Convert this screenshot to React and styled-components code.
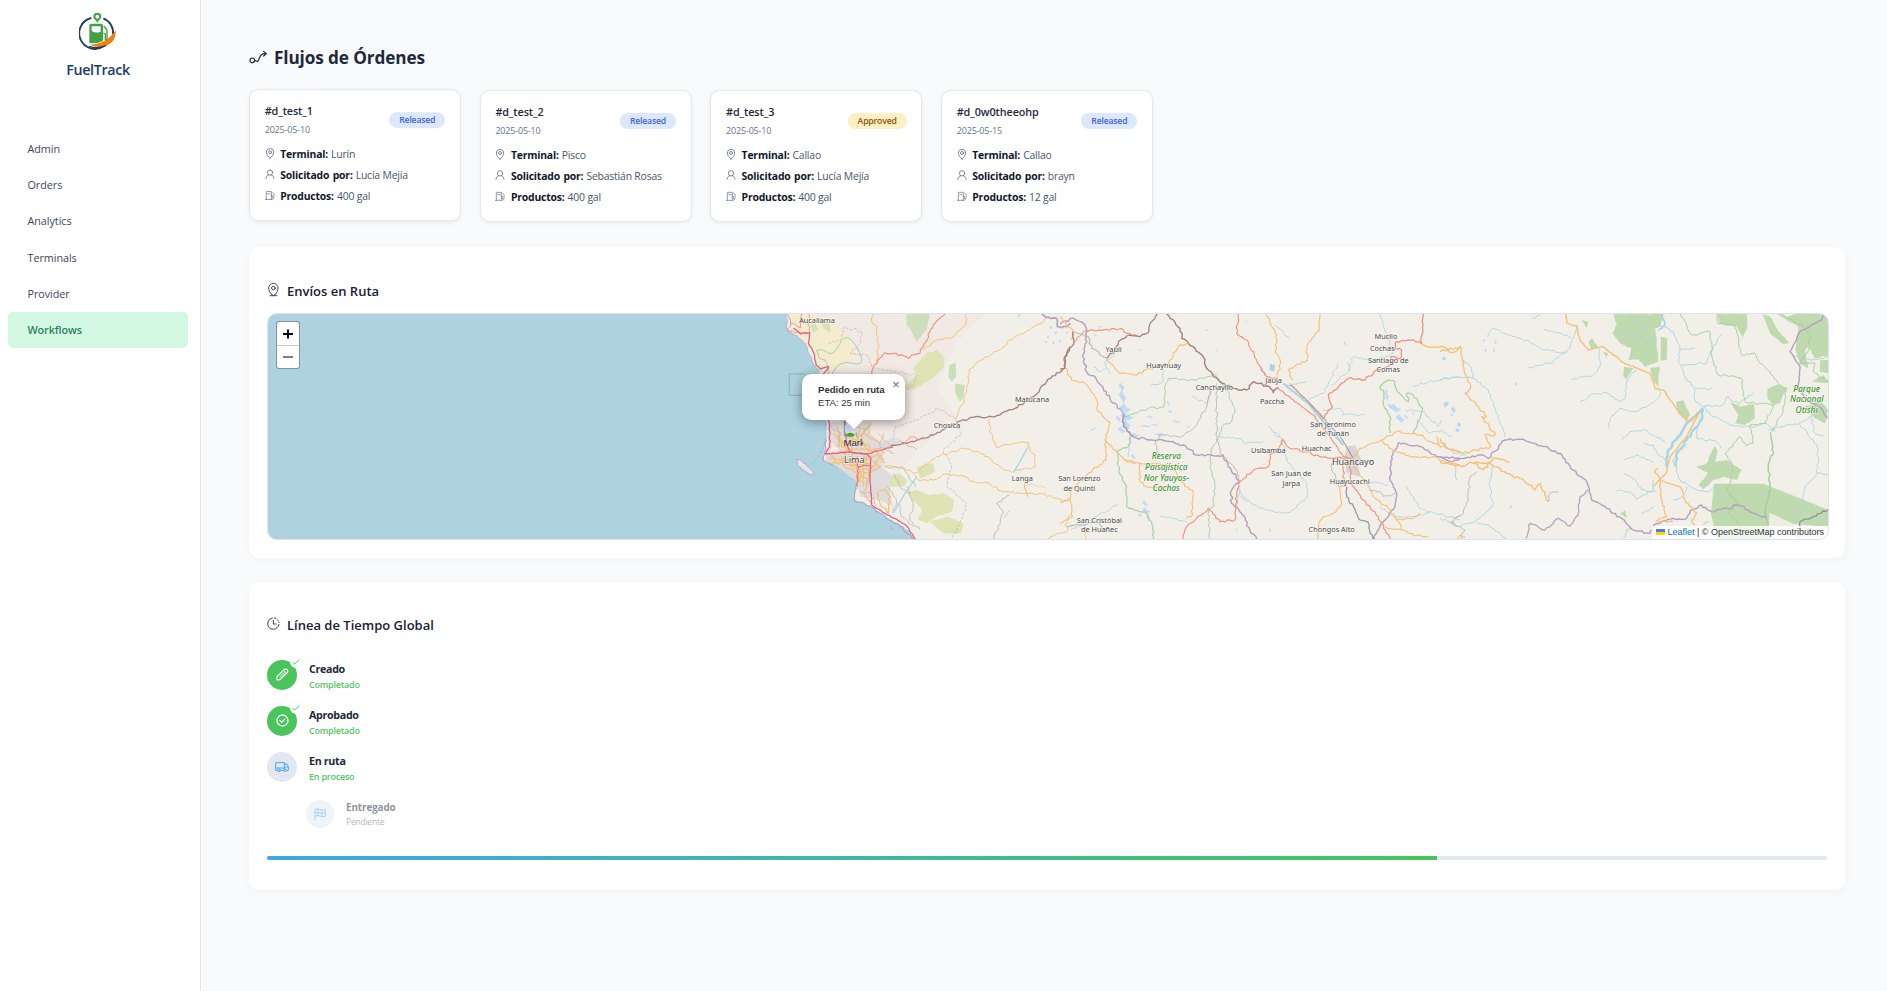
import React from 'react';
import styled, { createGlobalStyle } from 'styled-components';

const Global = createGlobalStyle`
  *, *::before, *::after { box-sizing: border-box; }
  body {
    margin: 0;
    background: #f8fafc;
    color: #0f172a;
    font-family: "Open Sans", "Noto Sans", sans-serif;
    overflow: hidden;
  }
  h1, h2, p { margin: 0; }
`;

/* ---------- layout ---------- */

const Shell = styled.div`
  display: flex;
  height: 991px;
`;

const Sidebar = styled.aside`
  flex: 0 0 201px;
  background: #fff;
  border-right: 1px solid #e2e5ea;
`;

const Brand = styled.div`
  display: flex;
  flex-direction: column;
  align-items: center;
  padding: 12px 4px 0 0;
  height: 131px;
`;

const BrandName = styled.div`
  margin-top: 10px;
  font-size: 14.3px;
  line-height: 20px;
  font-weight: 600;
  letter-spacing: -0.35px;
  color: #1a3b66;
`;

const Nav = styled.nav`
  display: flex;
  flex-direction: column;
  padding: 0 12px 0 8px;
`;

const NavItem = styled.a`
  height: 36.2px;
  line-height: 36px;
  padding-left: 19.5px;
  border-radius: 5px;
  font-size: 10.8px;
  letter-spacing: ${(p) => (p.$active ? '-0.1px' : '-0.05px')};
  font-weight: ${(p) => (p.$active ? 600 : 400)};
  color: ${(p) => (p.$active ? '#2b8060' : '#3d4656')};
  background: ${(p) => (p.$active ? '#d3f9e2' : 'transparent')};
`;

const Main = styled.main`
  flex: 1;
  min-width: 0;
  padding: 43px 42px 0 48px;
`;

const PageTitle = styled.h1`
  display: flex;
  align-items: center;
  gap: 6px;
  height: 28px;
  font-size: 17.2px;
  font-weight: 700;
  letter-spacing: -0.12px;
  color: #1e293b;
`;

const CardGrid = styled.div`
  display: grid;
  grid-template-columns: repeat(4, 212px);
  gap: 18.7px;
  margin-top: 19.3px;
`;

const Card = styled.article`
  height: 132px;
  padding: 12.8px 14.7px;
  background: #fff;
  border: 1px solid #e2e8f0;
  border-radius: 9.6px;
  box-shadow: 0 1px 4px rgba(15, 23, 42, 0.06);
  transform: ${(p) => (p.$raised ? 'translateY(-0.8px)' : 'none')};
`;

const CardHead = styled.header`
  display: flex;
  align-items: center;
  justify-content: space-between;
  height: 34px;
  margin-bottom: 6px;
`;

const OrderId = styled.div`
  font-size: 10.8px;
  line-height: 16px;
  font-weight: 600;
  letter-spacing: -0.1px;
  color: #1e293b;
`;

const OrderDate = styled.div`
  margin-top: 4px;
  font-size: 9px;
  line-height: 14px;
  letter-spacing: -0.18px;
  color: #64748b;
`;

const badgeTones = {
  Released: { bg: '#dbe8fe', fg: '#4763de' },
  Approved: { bg: '#fef0c3', fg: '#93500f' },
};

const Badge = styled.span`
  height: 16px;
  line-height: 16px;
  padding: 0 10px;
  border-radius: 8px;
  font-size: 8.7px;
  font-weight: 600;
  letter-spacing: -0.2px;
  background: ${(p) => badgeTones[p.$tone].bg};
  color: ${(p) => badgeTones[p.$tone].fg};
`;

const Row = styled.div`
  display: flex;
  align-items: center;
  height: 21px;
  font-size: 10.4px;
  color: #475569;
  white-space: nowrap;

  svg { margin: -2px 5.5px 0 0; }
`;

const RowLabel = styled.strong`
  margin-right: 3px;
  font-weight: 700;
  letter-spacing: -0.18px;
  word-spacing: 1px;
  color: #0f172a;
`;

const RowValue = styled.span`
  letter-spacing: -0.18px;
`;

const Panel = styled.section`
  height: ${(p) => p.$h}px;
  margin-top: ${(p) => p.$gap}px;
  padding: ${(p) => p.$top}px 16px 0 18px;
  background: #fff;
  border-radius: 10px;
  box-shadow: 0 2px 10px rgba(15, 23, 42, 0.035);
`;

const PanelTitle = styled.h2`
  display: flex;
  align-items: center;
  height: 24px;
  gap: 7px;
  font-size: 13px;
  font-weight: 600;
  color: #1a2035;

  svg { margin-top: -3px; }
`;

/* ---------- map ---------- */

const MapBox = styled.div`
  position: relative;
  width: 1562px;
  height: 227px;
  margin-top: 10px;
  border: 1px solid #dbe4ee;
  border-radius: 9.6px;
  overflow: hidden;
  font-family: "Liberation Sans", Arial, sans-serif;
`;

const MapCanvas = styled.svg`
  display: block;
`;

const ZoomControl = styled.div`
  position: absolute;
  left: 8px;
  top: 7px;
  width: 24px;
  height: 48px;
  border: 1px solid rgba(0, 0, 0, 0.28);
  border-radius: 3px;
  background: #fff;
  background-clip: padding-box;
`;

const ZoomButton = styled.div`
  display: flex;
  align-items: center;
  justify-content: center;
  height: 23px;
  & + & { border-top: 1px solid #ccc; }
`;

const Popup = styled.div`
  position: absolute;
  left: 534px;
  top: 60px;
  width: 103px;
  height: 46px;
  padding: 10px 0 0 16px;
  border-radius: 9.6px;
  background: #fff;
  box-shadow: 0 2px 11px rgba(0, 0, 0, 0.4);
  font-size: 9.6px;
  line-height: 12.6px;
  color: #333;

  &::after {
    content: '';
    position: absolute;
    left: 42.5px;
    top: 45.5px;
    border: 9px solid transparent;
    border-top-color: #fff;
    border-bottom: 0;
  }
`;

const PopupClose = styled.span`
  position: absolute;
  right: 5px;
  top: 3.5px;
  font-size: 13.5px;
  line-height: 14px;
  color: #757575;
`;

const Attribution = styled.div`
  position: absolute;
  right: 0;
  bottom: 0;
  display: flex;
  align-items: center;
  height: 13px;
  padding: 0 4px 1px;
  background: rgba(255, 255, 255, 0.8);
  font-size: 9px;
  color: #333;
  white-space: pre;

  a { color: #0078a8; margin-left: 2.5px; }
`;

const C = {
  land: '#f2efe9',
  sea: '#aed2e0',
  water: '#a9d4e3',
  lake: '#b3d6f7',
  park: '#bfdaae',
  farm: '#dde3b3',
  orange: '#f5c077',
  red: '#f2917c',
  pink: '#df6183',
  purple: '#b5a1bd',
  green: '#a3cfa0',
  rail: '#a4807d',
  grey: '#bdb9b9',
};

// Turns "x,y x,y" vertices into a slightly irregular line, as surveyed roads and rivers are.
function rough(points, amp = 3.4) {
  const p = points.trim().split(/\s+/).map((s) => s.split(',').map(Number));
  let seed = p[0][0] * 13 + p[0][1] * 7 + p.length;
  const rnd = () => {
    seed = (((seed * 9301 + 49297) % 233280) + 233280) % 233280;
    return seed / 233280 - 0.5;
  };
  let d = `M${p[0][0]} ${p[0][1]}`;
  for (let i = 1; i < p.length; i++) {
    const [x0, y0] = p[i - 1];
    const [x1, y1] = p[i];
    const len = Math.hypot(x1 - x0, y1 - y0);
    const n = Math.max(1, Math.round(len / 8));
    for (let k = 1; k <= n; k++) {
      const t = k / n;
      const o = k === n ? 0 : rnd() * 2 * amp;
      const x = x0 + (x1 - x0) * t - ((y1 - y0) / len) * o;
      const y = y0 + (y1 - y0) * t + ((x1 - x0) / len) * o;
      d += `L${x.toFixed(1)} ${y.toFixed(1)}`;
    }
  }
  return d;
}

const Line = ({ c, p, w = 3.4, a, dash, o = 1 }) => (
  <path d={rough(p, a)} fill="none" stroke={C[c]} strokeWidth={w * 0.85} strokeLinejoin="round" strokeDasharray={dash} opacity={o} />
);
const Area = ({ c, p, fill, o = 1 }) => <path d={rough(p, 1.5) + 'Z'} fill={fill || C[c]} opacity={o} />;

const Label = ({ x, y, s = 22, big, park, children }) => (
  <text
    x={x}
    y={y}
    textAnchor="middle"
    fontFamily='"Noto Sans", "Open Sans", sans-serif'
    fontSize={big ? 27 : s}
    fontStyle={park ? 'italic' : 'normal'}
    fontWeight={park ? 500 : 400}
    fill={park ? '#3f9434' : '#474747'}
    stroke="#fbfaf7"
    strokeWidth="4"
    strokeOpacity="0.75"
    strokeLinejoin="round"
    paintOrder="stroke"
  >
    {children}
  </text>
);

const Coast = () => (
  <g transform="translate(502 -14) scale(0.33333)">
    <Area fill="#f1e9e3" p="90,40 640,40 560,130 500,260 560,350 460,440 380,520 300,470 160,300 130,180" />
    <Area fill="#f5ecd0" p="60,40 160,50 210,85 240,120 260,170 200,210 150,205 125,150 80,100" />
    <Area c="sea" p="-1510,30 48,30 52,90 75,105 95,120 108,135 120,165 130,190 148,215 160,300 170,370 170,420 163,450 160,482 200,500 235,515 262,545 255,575 252,600 300,618 345,650 385,672 415,690 437,725 -1510,725" />
    <Line c="purple" w="3" o={0.8} p="48,40 52,90 75,105 95,120 108,135 120,165 130,190 148,215" />
    <Line c="purple" w="4" p="170,420 160,482 200,500 235,515 262,545 255,575 252,600 300,618 345,650 385,672 437,725" />
    <Area fill="#e9e6e8" p="80,478 95,482 112,500 130,515 128,524 105,512 84,495" />
    <Line c="purple" w="2.5" p="80,478 95,482 112,500 130,515 128,524 105,512 84,495 80,478" />
    <Line c="purple" w="3" p="132,521 137,526" />
    <Line c="purple" w="3" p="360,676 370,690" />
    <path d="M58 222H104M58 222V286H104" fill="none" stroke="#7fbba6" strokeWidth="3" />
    <path d="M166 370Q172 430 150 462T118 496" fill="none" stroke="#87b5e0" strokeWidth="2" strokeDasharray="8 6" />
    {/* farmland and hills */}
    <Area c="park" o={0.75} p="410,42 478,42 470,90 440,125 425,95 410,75" />
    <Area c="farm" p="430,205 470,160 500,150 522,170 520,205 480,240 430,270 400,265 440,225" />
    <Area c="park" o={0.8} p="538,195 556,188 558,230 545,245 535,230" />
    <Area c="park" o={0.8} p="555,250 585,255 580,290 570,305 555,275" />
    <Area c="farm" p="410,575 440,570 480,585 520,580 552,600 545,635 500,650 470,670 445,660 455,625 425,600" />
    <Area c="farm" p="480,665 530,650 580,670 575,700 520,700" />
    <Area c="farm" p="350,530 390,520 412,545 400,560 345,560" />
    <Area c="farm" p="440,500 490,490 495,515 450,535" />
    <Area c="park" o={0.6} p="120,75 135,68 145,90 130,100" />
    <Area c="park" o={0.6} p="150,55 180,70 180,95 160,85" />
    {/* city */}
    <Area fill="#dfdcdd" p="172,365 300,365 300,400 330,430 370,410 400,425 340,450 335,500 365,525 355,560 370,620 330,600 270,590 262,545 200,500 165,482 175,440" />
    {[
      '190,400 230,440 220,480 260,500 270,545', '200,380 210,430 190,470', '240,380 250,430 240,500', '270,375 262,430 300,440 285,500',
      '175,475 240,480 330,465 345,490', '180,490 260,485 300,500 290,560', '300,370 275,410 290,450', '200,460 260,445 320,455 335,480',
      '250,515 300,520 280,580 310,610', '310,480 330,500 300,520', '325,570 345,568 360,590 355,640 330,610 320,575', '215,470 225,500 250,510',
      '270,500 275,530 262,545', '225,410 262,420 280,400 330,430', '258,470 262,560', '282,470 280,560', '205,480 300,478', '230,492 305,490',
      '210,400 215,440 250,450', '275,510 310,500 335,465', '270,530 300,535', '245,465 250,510', '185,465 205,495', '300,450 330,445 345,460',
    ].map((p) => <Line key={p} c="orange" w="4.6" p={p} />)}
    {['180,380 215,400 200,440', '225,380 290,385 270,420', '340,400 330,440 370,460', '345,500 400,505 440,560', '270,575 300,580 320,620', '350,560 380,600 370,640', '390,420 420,440 440,450', '410,560 430,610 420,660 450,690', '385,610 395,650 430,680', '370,520 390,560 420,580'].map((p) => <Line key={p} c="grey" w="3" a={4} p={p} />)}
    <Area fill="#fbe6e0" p="182,425 205,445 195,465 180,455" />
    {/* borders */}
    <Line c="purple" w="2" dash="9 4" p="175,130 210,120 225,80 275,95 270,130 240,160 290,165 310,205 380,215 440,225 430,260 400,270" />
    <Line c="purple" w="2" dash="9 4" p="370,410 375,380 430,365 470,345 505,325 555,355 575,400 520,450 545,500 530,560 590,610 580,650 545,715" />
    <path d="M140 150Q160 145 175 158T210 130T262 145T250 190T190 215T175 200L165 180L148 175Z" fill="none" stroke={C.green} strokeWidth="3" />
    {/* roads */}
    <Line c="red" w="3.5" p="52,40 62,70 92,82 95,42" />
    <Line c="red" w="3.5" p="62,70 52,90 90,100 115,98" />
    <Line c="red" w="3" p="115,40 118,98" />
    <Line c="pink" w="4.5" a={1.5} p="70,85 92,102 120,98 115,130 132,160 138,195 152,207 176,200 160,222 172,300 178,370 180,440 165,462 235,456 290,462 303,475 300,540 305,615 345,640 385,662 412,680 437,718" />
    <Line c="pink" w="4" a={1.5} p="225,360 230,430 240,456 290,462 370,440" />
    <Line c="pink" w="3.5" p="262,470 265,520 262,560" />
    <Line c="pink" w="3.5" p="262,500 302,498" />
    <Line c="red" w="4" p="525,42 490,75 480,95 460,140 450,160 425,165 415,175 370,160 345,158 310,200 305,225" />
    <Line c="orange" p="312,42 305,65 320,80 325,130 320,180 312,200" />
    <Line c="orange" p="590,42 585,75 540,115 500,120 460,150" />
    <Line c="orange" p="840,50 780,90 720,120 690,150 630,180 597,210 595,250 580,310 555,360" />
    <Line c="rail" w="4.5" p="360,440 440,420 490,405 550,372 610,352 650,352 690,345 735,325 790,290 830,245 880,205" />
    <Line c="rail" w="4.5" p="885,205 882,180 902,140" />
    <Line c="red" w="3" p="400,435 425,410 460,420" />
    <Line c="orange" p="658,355 662,400 680,442 740,428 775,428 780,450 795,465 795,500 730,515" />
    <Line c="orange" p="340,498 400,502 435,520 500,470 580,445 640,462 690,500 725,517" />
    <Line c="orange" p="435,525 445,540 490,540 520,522 590,530 600,545 650,548 700,575 760,580 810,580 885,605 900,595" />
    <Line c="orange" p="762,545 772,590" w="4" />
    <Line c="orange" p="770,550 830,565" w="2" />
    <Line c="orange" p="900,645 885,675 895,690 825,718" />
    <Line c="orange" w="3" p="305,365 290,410" />
    <Line c="orange" w="3" p="325,400 360,438" />
    <Line c="grey" p="718,585 680,612 700,640 670,718" />
    <path d="M775 440L750 485L730 518M440 530L405 580L370 640" fill="none" stroke={C.water} strokeWidth="3.6" />
    <Line c="water" w="3" p="720,632 702,655" />
    {[[840, 85], [855, 100], [848, 130], [825, 128], [888, 100], [745, 48], [868, 125], [832, 112]].map(([x, y]) => (
      <path key={x} d={`M${x} ${y}l5 -4`} stroke={C.lake} strokeWidth="5" />
    ))}
    <Line c="purple" w="6" p="815,42 835,52 860,55 862,80 890,80 902,70" />
    <Label x={141} y={69}>Aucallama</Label>
    <Label x={786} y={305}>Matucana</Label>
    <Label x={531} y={383}>Chosica</Label>
    <Label x={757} y={542}>Langa</Label>
    <Label x={253} y={489} big>Lima</Label>
    {/* marker whose picture is missing */}
    <path d="M223 362V408" stroke="#8c8c8c" strokeWidth="3" />
    <path d="M225 375H260V395Q245 385 225 400Z" fill="#c5d5f4" />
    <path d="M225 409Q236 390 254 404L249 410Z" fill="#43a32c" />
    <path d="M252 405L260 398V412" fill="none" stroke="#888" strokeWidth="2" />
  </g>
);

const Central = () => (
  <g transform="translate(792 -14) scale(0.33333)">
    {/* rivers and lakes */}
    {[
      '100,200 120,215 140,205 135,185 165,160', '140,205 150,222', '310,210 308,245 270,258', '395,290 440,310 455,270', '480,412 540,415 560,430 610,425',
      '645,75 690,115', '960,42 980,100 1000,160 940,180 880,170 865,210', '640,400 665,415 680,480 740,550 742,590 690,638 648,638', '535,565 560,600 600,625 650,638',
      '745,300 790,280 835,190', '790,330 840,325 850,345 915,345', '790,355 760,330', '680,255 740,245', '210,405 205,470', '540,560 530,620',
      '925,545 985,555', '1040,560 1080,625 1110,635 1200,660', '960,620 1000,650 1060,650 1110,638', '1070,360 1110,400 1145,390 1175,410', '1035,330 1090,335 1135,380 1145,360', '1060,258 1150,235 1200,230',
      '30,690 90,660 175,612', '90,395 110,380', '815,255 870,210 862,185', '625,380 660,410', '560,605 540,590', '300,650 340,655 380,665',
    ].map((p) => <Line key={p} c="water" w="3" p={p} />)}
    <Line c="water" w="8" a={1} p="670,250 700,275 745,310 790,365 850,435" />
    <Area fill="#a9d4e3" p="630,190 645,195 642,215 628,210" />
    {[
      [185, 260, 10, 12], [188, 290, 12, 22], [195, 325, 18, 14], [200, 350, 22, 12], [198, 372, 14, 20], [175, 355, 8, 10], [185, 390, 12, 10], [225, 405, 16, 6],
      [300, 405, 18, 5], [330, 335, 8, 5], [325, 310, 5, 8], [350, 365, 14, 4], [270, 350, 12, 4], [258, 378, 20, 4], [385, 380, 6, 4], [220, 470, 7, 9],
      [255, 610, 9, 9], [258, 632, 14, 8], [240, 645, 8, 5], [265, 655, 6, 9], [1005, 325, 18, 14], [1020, 355, 14, 14], [980, 285, 6, 18], [990, 318, 8, 8], [1038, 350, 6, 6],
      [1155, 315, 6, 9], [1180, 330, 7, 12], [1175, 345, 5, 5], [120, 80, 8, 3], [105, 105, 6, 3], [88, 130, 5, 3], [240, 150, 4, 4], [440, 90, 5, 3], [470, 150, 4, 3], [285, 375, 14, 3], [560, 65, 4, 3], [855, 130, 4, 8], [630, 690, 4, 7], [530, 690, 3, 5], [1060, 340, 4, 4],
    ].map(([x, y, w, h]) => (
      <Area key={`${x}-${y}`} c="lake" o={0.8} p={`${x - w},${y - h * 0.3} ${x - w * 0.2},${y - h} ${x + w * 0.3},${y - h * 0.2} ${x + w},${y + h * 0.2} ${x + w * 0.2},${y + h} ${x - w * 0.4},${y + h * 0.3}`} />
    ))}
    <Area fill="#d6d4d4" p="860,440 885,435 905,480 895,500 900,530 862,520 850,480" />
    {/* reserve boundary */}
    <Line c="green" p="470,225 410,240 325,235 315,260 312,320 265,325 195,350" />
    <Line c="green" p="465,232 500,270 525,330 510,370 490,375 475,415 455,445 450,500 465,560 460,620 445,635 450,718" />
    <Line c="green" p="212,410 205,440 170,455 178,520 200,560 200,620 260,640 280,680 278,718" w="4" />
    <Line c="green" w="4" p="990,400 990,350 970,310 972,280 960,260 985,240 1005,245 1012,275 1030,292 1045,305 1040,280 1060,285 1088,325 1060,402" />
    {/* provincial boundary */}
    <Line c="purple" w="5" a={4} p="0,72 40,55 75,75 80,110 68,170 80,215 110,240 150,295 190,340 190,380 220,410 270,420 300,418 370,435 410,465 490,465 505,500 540,545 515,570 515,610 545,640 570,690 590,718" />
    <Line c="rail" w="3" o={0.7} a={4} p="188,345 190,380 220,410" />
    <Line c="purple" w="5" a={3} p="940,715 965,670 1005,620 1010,580 990,540 995,470 1015,428 1080,440 1130,470 1200,475" />
    {/* roads */}
    <Line c="red" w="4" p="75,92 140,88 185,85 200,100 235,110" />
    <Line c="orange" w="4" p="0,50 40,95 35,120" />
    <Line c="rail" w="4.5" p="292,42 268,78 265,98 240,110 200,108 175,125 165,150 140,175" />
    <Line c="grey" w="4" p="40,95 85,110 95,145 140,175" />
    <Line c="rail" w="4.5" p="38,95 42,125 18,165 15,205 0,208" />
    <Line c="red" w="3.5" p="42,125 75,92" />
    <Line c="rail" w="5" p="320,42 360,85 365,115 400,140 435,180 440,205 480,245 535,270 560,270 580,245 628,260 640,278 655,262" />
    <Line c="orange" w="4" p="140,178 180,220 230,225 260,208 320,195 355,140 385,128" />
    <Line c="orange" w="4" p="18,205 35,240 75,250 105,290 115,335 150,368 135,420 138,480 80,525 35,570 30,600 0,605" />
    <Line c="orange" w="4" p="138,422 195,480 240,492 240,545 260,560 330,560" />
    <Line c="orange" w="4" p="195,480 225,490" />
    <Line c="orange" w="4" p="240,490 330,492 350,520 375,560 398,570 395,650 378,655" />
    <Line c="orange" w="4" p="30,600 38,650 0,670" />
    <Line c="grey" w="4" p="20,680 60,675 110,665 130,690" />
    <Line c="orange" w="3" p="80,718 75,680" />
    <Line c="grey" w="3.5" p="470,250 470,420 480,460 530,510 540,545" />
    <Line c="grey" w="3.5" p="450,270 440,320 400,385 360,412 300,402 285,430 295,465" />
    <Line c="red" w="4" p="535,42 530,100 560,120 590,180 620,230 650,235" />
    <Line c="red" w="4" a={1.5} p="655,265 700,300 760,345 810,410 850,470 875,475" />
    <Line c="rail" w="3.5" a={1} p="690,255 740,300 800,365 845,415 880,475" />
    <Line c="red" w="3" a={1} p="690,250 750,310 790,350" />
    <Line c="orange" w="4" p="618,42 640,85 650,105 648,160 662,190 650,235" />
    <Line c="orange" w="4" p="780,42 778,90 740,140 742,180 685,210 700,240" />
    <Line c="red" w="4.5" p="1090,42 1085,130 1060,120 1008,125 1005,145 1025,150 1022,175 992,170 990,195 950,210 915,240 865,235 840,255 805,285 818,320 785,355" />
    <Line c="orange" w="5" p="1085,132 1110,142 1150,140 1175,158 1200,142" />
    <Line c="red" w="4" p="370,718 380,680 445,625 480,665 525,660 530,580 540,545 580,510 625,500 630,465 655,455 668,418 690,445 740,455 780,470 860,475" />
    <Line c="orange" w="4" p="880,475 900,445 965,420 1010,395 1080,405 1120,430 1165,445 1200,455" />
    <Line c="orange" w="4" p="965,420 1000,455 1060,470 1120,470 1160,490 1200,495" />
    <Line c="orange" w="4" p="1130,410 1140,435" />
    <Line c="orange" w="4" p="880,500 920,550 940,590 985,625 1015,665 1025,690 975,680" />
    <Line c="orange" w="4" p="1010,660 1060,655 1080,640" />
    <Line c="orange" w="4" p="860,555 840,560 845,610 820,640 790,650 775,680 775,718" />
    <Line c="orange" w="4" p="1025,690 1060,705 1105,712" />
    <Line c="red" w="4" p="870,480 872,550 910,600 955,650 990,718" />
    <Line c="red" w="4" p="850,480 852,560" />
    <Line c="grey" w="3.5" p="830,470 815,500 835,560" />
    <path d={rough('860,560 860,590 880,620 900,660 925,668 930,700 945,718', 3)} fill="none" stroke="#8d949c" strokeWidth="3.6" />
    <Line c="grey" w="3.5" p="930,570 960,575 970,590 1005,580" />
    <Line c="grey" w="3.5" p="1200,645 1180,660 1190,680" />
    <Line c="purple" w="3" p="600,200 625,240" />
    <Label x={161} y={156}>Yauli</Label>
    <Label x={311} y={204}>Huayhuay</Label>
    <Label x={463} y={270}>Canchayllo</Label>
    <Label x={641} y={250}>Jauja</Label>
    <Label x={636} y={313}>Paccha</Label>
    <Label x={978} y={117}>Mucllo</Label>
    <Label x={967} y={152}>Cochas</Label>
    <Label x={985} y={188}>Santiago de</Label>
    <Label x={985} y={216}>Comas</Label>
    <Label x={819} y={381}>San Jerónimo</Label>
    <Label x={819} y={408}>de Tunán</Label>
    <Label x={625} y={458}>Usibamba</Label>
    <Label x={770} y={452}>Huachac</Label>
    <Label x={879} y={495} big>Huancayo</Label>
    <Label x={869} y={552}>Huayucachi</Label>
    <Label x={694} y={528}>San Juan de</Label>
    <Label x={694} y={557}>Jarpa</Label>
    <Label x={58} y={544}>San Lorenzo</Label>
    <Label x={58} y={572}>de Quinti</Label>
    <Label x={118} y={668}>San Cristóbal</Label>
    <Label x={118} y={696}>de Huañec</Label>
    <Label x={815} y={696}>Chongos Alto</Label>
    <Label x={319} y={478} s={25} park>Reserva</Label>
    <Label x={319} y={510} s={25} park>Paisajística</Label>
    <Label x={319} y={542} s={25} park>Nor Yauyos-</Label>
    <Label x={319} y={574} s={25} park>Cochas</Label>
  </g>
);

const East = () => (
  <g transform="translate(1172 -14) scale(0.33333)">
    {/* forest reserves */}
    <Area c="park" p="520,42 672,42 660,80 645,85 650,120 655,185 615,200 595,178 565,180 575,145 540,130 517,100 530,75" />
    <Area c="park" p="662,110 682,115 680,180 662,182" />
    <Area c="park" p="832,42 920,42 922,80 908,115 890,80 840,72" />
    <Area c="park" p="968,42 990,50 1010,85 1048,130 1030,132 990,100" />
    <Area c="park" p="1012,42 1030,42 1040,52 1070,42 1165,42 1165,165 1125,175 1105,140 1095,150 1105,205 1080,190 1066,150 1070,110 1075,80 1040,60" />
    <Area c="park" p="1140,182 1165,180 1165,220 1140,215" />
    <Area c="park" p="1115,245 1150,225 1165,250" />
    <Area c="park" p="1100,320 1140,300 1165,330 1155,370 1125,355" />
    <Area c="park" p="982,268 1010,255 1040,262 1020,310 1000,315 982,295" />
    <Area c="park" p="870,305 900,320 942,312 945,355 915,375 885,370 895,345" />
    <Area c="park" p="708,305 732,302 738,320 750,345 740,365 712,335" />
    <Area c="park" p="630,205 660,200 655,225 655,260 640,240" />
    <Area c="park" p="552,200 580,205 560,235 550,230" />
    <Area c="park" p="768,500 800,490 825,435 832,450 825,485 860,480 905,510 890,540 850,530 820,540 790,568 776,555 805,520" />
    <Area c="park" p="425,60 445,65 440,85" />
    <Area c="park" p="445,125 455,115 475,140 455,150" />
    <Area c="park" p="490,155 505,160 500,175" />
    <Area c="park" p="540,640 555,630 560,655" />
    <path d="M822 551L970 551L1165 630V718H830L813 640Z" fill={C.park} />
    <path d="M988 638L1062 672L1165 680V718H985Z" fill={C.land} opacity="0.9" />
    {/* rivers */}
    {[
      '140,110 158,85 210,105 270,125 310,150 380,158 405,100 412,75', '310,90 350,98 395,115', '262,205 330,190 375,160', '475,145 480,200 460,225 395,240', '278,55 300,45', '420,308 450,285 500,278 540,305 555,295 560,235 590,210',
      '505,385 510,355 540,325 590,335 650,300 662,275', '545,420 570,395 610,388 640,405 675,425', '610,430 640,435 655,465 680,480', '552,480 590,465 640,485', '552,520 590,545 605,570 650,575', '530,573 570,575 590,598 640,570 640,540',
      '570,42 590,70 625,80', '545,90 600,110 620,130 640,110', '660,75 700,95 720,140 715,185 735,230 760,260 765,300 790,320', '720,150 765,145', '725,195 800,190 815,150 845,105', '765,262 810,270 815,262',
      '790,320 850,315 860,290 895,312 940,280', '790,320 820,350 870,375 930,380 980,370 1005,395', '985,390 1050,375 1080,370 1115,350 1120,320', '1115,355 1125,400 1150,408', '1080,375 1120,420 1135,450 1130,520 1165,525', '1130,525 1095,560 1085,630 1060,670',
      '780,350 770,415 830,425 845,445', '740,430 700,480 720,540 770,570 800,575 840,555', '700,600 730,590 740,560', '605,640 640,620', '0,240 50,232 100,235 145,270 170,340 195,410', '70,180 95,205 100,235', '0,420 40,460 80,465', '158,500 150,560 158,620 110,660 60,680 0,655', '110,665 150,680 180,700 200,715', '48,500 50,540',
      '1060,165 1110,180 1165,170', '550,715 560,690 575,680', '955,600 970,580',
    ].map((p) => <Line key={p} c="water" w="3.2" p={p} />)}
    <Line c="water" w="6" a={3} p="665,42 675,75 655,90" />
    <Line c="water" w="9" a={3} p="790,325 745,365 715,410 685,450 678,500" />
    <Line c="water" w="8" a={3} p="790,330 785,360 740,420 710,460 708,500" />
    {[[10, 180], [18, 315], [38, 332], [55, 378], [50, 395], [135, 155], [160, 155], [130, 125], [226, 256], [210, 625], [165, 130]].map(([x, y]) => (
      <path key={`${x}${y}`} d={`M${x} ${y}l4 -8`} stroke={C.lake} strokeWidth={x < 60 ? 10 : 4} />
    ))}
    {/* boundaries */}
    <Line c="green" p="722,42 755,105 810,95 818,180 835,225 905,235 915,305 1000,315 975,370 930,375 940,430 920,438 900,410 855,462 880,500 862,570 895,610 865,640 900,675" />
    <Line c="green" p="832,42 835,72 885,75 905,165 945,160 960,190 990,215 1015,255 1040,265 1025,345 990,400" />
    <Line c="green" p="990,400 1000,455 985,490 990,560 975,640 985,675" w="5" />
    <Line c="green" p="1040,50 1090,80 1110,110 1105,150 1080,190 1125,190 1120,215 1165,245" />
    <Line c="purple" w="5" a={1.5} p="1150,42 1145,60 1080,95 1050,155 1080,200 1075,265 1100,300 1145,325 1162,355" />
    <Line c="purple" w="5" a={4} p="0,470 30,485 60,475 120,465 145,475 195,420 250,418 310,440 360,460 400,510 440,545 455,600 500,625 545,655 580,690 630,700 650,670 700,655 740,655 750,632 785,615 815,635 860,625 895,615 945,640 980,655" />
    <Line c="purple" w="4.5" a={3} p="258,715 270,670 315,690 355,655 390,678 415,640 420,590 445,570" />
    <path d={rough('1075,715 1080,665 1120,650 1165,628', 3)} fill="none" stroke="#929292" strokeWidth="4" />
    {/* roads */}
    <Line c="orange" w="4.5" a={4} p="0,155 62,140 72,205 92,265 75,280 115,320 140,350 125,350 165,405 135,405 152,440 70,460 20,445 0,415" />
    <Line c="orange" w="5" a={5} p="0,485 45,498 100,490 130,490 170,475 210,485" />
    <Line c="orange" w="5" a={5} p="100,490 130,510 150,490 200,520 240,535 285,570 300,550 325,605" />
    <Line c="grey" w="3.5" p="110,515 90,530 85,600 70,640 30,668 75,690 60,718" />
    <Line c="grey" w="3.5" p="325,605 330,580 355,575" />
    <Line c="orange" w="5" a={1.5} p="378,42 380,70 410,78 420,120 445,150 490,140 550,188 630,220 645,265 670,270 705,320 742,365 775,342 740,410 690,470 678,520 640,560" />
    <Line c="orange" w="4.5" p="655,505 645,510 660,540 665,600 680,650 650,662 700,665" />
    <Line c="orange" w="4.5" p="665,540 720,560 735,600 770,640 755,660 765,675" />
    <Line c="orange" w="4" p="50,718 60,705 75,712" />
    <Line c="grey" w="3" p="790,675 805,665" />
    <Label x={1100} y={275} s={25} park>Parque</Label>
    <Label x={1100} y={307} s={25} park>Nacional</Label>
    <Label x={1100} y={339} s={25} park>Otishi</Label>
  </g>
);

/* ---------- timeline ---------- */

const Steps = styled.div`
  display: flex;
  flex-direction: column;
  gap: 16px;
  margin-top: 22.5px;
`;

const Step = styled.div`
  display: flex;
  align-items: ${(p) => (p.$pending ? 'flex-start' : 'center')};
  gap: 12px;
  height: 30px;
  margin: ${(p) => (p.$pending ? '2px 0 0 39px' : '0')};
  opacity: ${(p) => (p.$pending ? 0.5 : 1)};
`;

const StepIcon = styled.div`
  position: relative;
  display: flex;
  align-items: center;
  justify-content: center;
  width: ${(p) => (p.$small ? 28 : 30)}px;
  height: ${(p) => (p.$small ? 28 : 30)}px;
  border-radius: 50%;
  background: ${(p) => (p.$done ? '#49c55b' : '#e2e8f0')};
`;

const StepCheck = styled.span`
  position: absolute;
  right: -5px;
  top: -4px;
  display: flex;
  align-items: center;
  justify-content: center;
  width: 12px;
  height: 12px;
  border-radius: 50%;
  background: #fff;
  box-shadow: 0 0 2px rgba(0, 0, 0, 0.08);
`;

const StepName = styled.div`
  padding-top: ${(p) => (p.$small ? 0 : 3)}px;
  font-size: ${(p) => (p.$small ? 9.9 : 10.7)}px;
  line-height: ${(p) => (p.$small ? 15 : 16)}px;
  font-weight: 700;
  letter-spacing: ${(p) => (p.$small ? '-0.1px' : '-0.32px')};
  color: #1e293b;
`;

const StepState = styled.div`
  padding-top: ${(p) => (p.$small ? 1 : 0.5)}px;
  font-size: ${(p) => (p.$small ? 8.5 : 9)}px;
  line-height: ${(p) => (p.$small ? 12 : 14)}px;
  letter-spacing: -0.22px;
  font-weight: ${(p) => (p.$small ? 400 : 600)};
  color: ${(p) => (p.$small ? '#64748b' : '#53c865')};
`;

const Track = styled.div`
  width: 1560px;
  height: 4px;
  margin-top: 26px;
  border-radius: 2px;
  background: #e2e8f0;
`;

const Fill = styled.div`
  width: 75%;
  height: 100%;
  border-radius: 2px 0 0 2px;
  background: linear-gradient(90deg, #40a5ea, #49c55b);
`;

/* ---------- icons ---------- */

const Svg = ({ w, h, box, sw = 3, color = 'currentColor', children }) => (
  <svg width={w} height={h} viewBox={box} fill="none" stroke={color} strokeWidth={sw} strokeLinecap="round" strokeLinejoin="round">
    {children}
  </svg>
);

const Logo = () => (
  <svg width="38" height="38" viewBox="-3 0 114 114" fill="none">
    <path d="M34 18A47 47 0 1 0 72 102" stroke="#1f3d5c" strokeWidth="5.5" />
    <path d="M70 19A46 46 0 0 1 99 67" stroke="#1f3d5c" strokeWidth="5.5" />
    <path d="M30 98Q80 96 107 55Q110 88 80 101Q54 110 30 98Z" fill="#f08010" />
    <path d="M28 103Q50 112 78 101" stroke="#1f3d5c" strokeWidth="4" />
    <path d="M52 32C48 24 40 20 40 14A12 12 0 0 1 64 14C64 20 56 24 52 32Z" fill="#42a142" />
    <circle cx="52" cy="14" r="5.5" fill="#fff" />
    <path d="M28 41Q28 35 34 35H63Q69 35 69 41V86Q50 97 28 93Z" fill="#42a142" />
    <path d="M35 43H62V59Q48 65 35 57Z" fill="#fff" />
    <path d="M71 42L81 54V80Q80 86 76 83V66L70 63" stroke="#42a142" strokeWidth="4" />
  </svg>
);

const RouteIcon = () => (
  <Svg w={19} h={15} box="0 0 57 45" sw={3.6}>
    <circle cx="10" cy="31" r="7" />
    <path d="M17 31C26 38 28 32 31 25C34 15 38 10 50 11M44 4L52 11L44 18" />
  </Svg>
);

const PinIcon = () => (
  <Svg w={10} h={12} box="0 0 30 36" sw={2.5} color="#64748b">
    <path d="M15 33C9 28 4 22 4 15A11 11 0 0 1 26 15C26 22 21 28 15 33Z" />
    <circle cx="15" cy="15" r="4.5" />
  </Svg>
);

const UserIcon = () => (
  <Svg w={10} h={12} box="0 0 30 36" sw={2.5} color="#64748b">
    <circle cx="15" cy="13" r="8" />
    <path d="M3 31C3 25 7 21 11 20M27 31C27 25 23 21 19 20" />
  </Svg>
);

const PumpIcon = () => (
  <Svg w={10} h={12} box="0 0 30 36" sw={2.1} color="#64748b">
    <path d="M1 31H22M4 31V7H19V31M8 14H15M19 19H22V27Q24 30 27 27V14L23 9" />
  </Svg>
);

const MapPinIcon = () => (
  <Svg w={13} h={15} box="0 0 39 45" sw={2.8} color="#334155">
    <path d="M13 37C8 32 5 25 5 18A14 14 0 0 1 33 18C33 25 30 32 25 37" />
    <path d="M9 41H30M13 36L19 41L25 36" />
    <circle cx="19" cy="18" r="5.5" />
  </Svg>
);

const ClockIcon = () => (
  <Svg w={13} h={13} box="0 0 39 39" sw={3} color="#334155">
    <path d="M16 3A17 17 0 1 0 36 22" />
    <path d="M22 3A17 17 0 0 1 36 17" strokeDasharray="4 5" />
    <path d="M19 10V21H27" />
  </Svg>
);

const PencilIcon = () => (
  <Svg w={13} h={13} box="0 0 39 39" sw={3.6} color="#fff">
    <path d="M3 36V26L25 4Q30 2 34 6Q37 10 34 14L12 35Z" />
    <path d="M11 27L26 12M14 30L29 15M23 7L32 16" strokeWidth="2.6" />
  </Svg>
);

const SealIcon = () => (
  <Svg w={13} h={13} box="0 0 39 39" sw={3.8} color="#fff">
    <circle cx="19.5" cy="19.5" r="16.5" />
    <path d="M12 20L17 25L27 15" />
  </Svg>
);

const TruckIcon = () => (
  <Svg w={14} h={10} box="0 0 42 30" sw={3} color="#4aa9ea">
    <path d="M7 25H2V2H28V25H17M28 6H36L40 14V25H37M28 15H40M3 18H27" />
    <circle cx="12" cy="25" r="4" />
    <circle cx="31" cy="25" r="4" />
  </Svg>
);

const FlagIcon = () => (
  <Svg w={12} h={12} box="0 0 36 36" sw={3} color="#4aa9ea">
    <path d="M3 34V4Q11 1 18 5T34 4V25Q26 28 18 24T3 25M3 14Q11 11 18 15T34 14M12 3V24M24 6V26" />
  </Svg>
);

const CheckIcon = () => (
  <Svg w={8} h={6} box="0 0 24 18" sw={2.8} color="#49c55b">
    <path d="M3 10L8 15L21 3" />
  </Svg>
);

/* ---------- page ---------- */

const navItems = ['Admin', 'Orders', 'Analytics', 'Terminals', 'Provider', 'Workflows'];

const orders = [
  { id: '#d_test_1', date: '2025-05-10', status: 'Released', terminal: 'Lurín', by: 'Lucía Mejía', qty: '400 gal' },
  { id: '#d_test_2', date: '2025-05-10', status: 'Released', terminal: 'Pisco', by: 'Sebastián Rosas', qty: '400 gal' },
  { id: '#d_test_3', date: '2025-05-10', status: 'Approved', terminal: 'Callao', by: 'Lucía Mejía', qty: '400 gal' },
  { id: '#d_0w0theeohp', date: '2025-05-15', status: 'Released', terminal: 'Callao', by: 'brayn', qty: '12 gal' },
];

const steps = [
  { name: 'Creado', state: 'Completado', icon: <PencilIcon />, done: true },
  { name: 'Aprobado', state: 'Completado', icon: <SealIcon />, done: true },
  { name: 'En ruta', state: 'En proceso', icon: <TruckIcon /> },
  { name: 'Entregado', state: 'Pendiente', icon: <FlagIcon />, pending: true },
];

function OrderCard({ order, raised }) {
  return (
    <Card $raised={raised}>
      <CardHead>
        <div>
          <OrderId>{order.id}</OrderId>
          <OrderDate>{order.date}</OrderDate>
        </div>
        <Badge $tone={order.status}>{order.status}</Badge>
      </CardHead>
      <Row><PinIcon /><RowLabel>Terminal:</RowLabel><RowValue>{order.terminal}</RowValue></Row>
      <Row><UserIcon /><RowLabel>Solicitado por:</RowLabel><RowValue>{order.by}</RowValue></Row>
      <Row><PumpIcon /><RowLabel>Productos:</RowLabel><RowValue>{order.qty}</RowValue></Row>
    </Card>
  );
}

function RouteMap() {
  return (
    <MapBox>
      <MapCanvas width="1560" height="225" viewBox="0 0 1560 225">
        <rect width="1560" height="225" fill={C.land} />
        <Coast />
        <Central />
        <East />
        <svg x="575.5" y="119" width="19.5" height="16">
          <text x="0" y="12.5" fontSize="9.6" fill="#333">Marker</text>
        </svg>
      </MapCanvas>
      <ZoomControl>
        <ZoomButton><Svg w={10} h={10} box="0 0 10 10" sw={2} color="#000"><path d="M5 0.5V9.5M0 5H10" strokeLinecap="butt" /></Svg></ZoomButton>
        <ZoomButton><Svg w={10} h={10} box="0 0 10 10" sw={1.2} color="#000"><path d="M0 5H10" strokeLinecap="butt" /></Svg></ZoomButton>
      </ZoomControl>
      <Popup>
        <b>Pedido en ruta</b>
        <div>ETA: 25 min</div>
        <PopupClose>×</PopupClose>
      </Popup>
      <Attribution>
        <svg width="9" height="6" viewBox="0 0 9 6"><path fill="#4c7be1" d="M0 0h9v3H0z" /><path fill="#ffd500" d="M0 3h9v3H0z" /></svg>
        <a>Leaflet</a> | © OpenStreetMap contributors
      </Attribution>
    </MapBox>
  );
}

export default function App() {
  return (
    <Shell>
      <Global />
      <Sidebar>
        <Brand>
          <Logo />
          <BrandName>FuelTrack</BrandName>
        </Brand>
        <Nav>
          {navItems.map((n) => <NavItem key={n} $active={n === 'Workflows'}>{n}</NavItem>)}
        </Nav>
      </Sidebar>
      <Main>
        <PageTitle><RouteIcon />Flujos de Órdenes</PageTitle>
        <CardGrid>
          {orders.map((o, i) => <OrderCard key={o.id} order={o} raised={i === 0} />)}
        </CardGrid>
        <Panel $h={311} $gap={24.5} $top={32.5}>
          <PanelTitle><MapPinIcon />Envíos en Ruta</PanelTitle>
          <RouteMap />
        </Panel>
        <Panel $h={308} $gap={24.2} $top={31.5}>
          <PanelTitle><ClockIcon />Línea de Tiempo Global</PanelTitle>
          <Steps>
            {steps.map((s) => (
              <Step key={s.name} $pending={s.pending}>
                <StepIcon $done={s.done} $small={s.pending}>
                  {s.icon}
                  {s.done && <StepCheck><CheckIcon /></StepCheck>}
                </StepIcon>
                <div>
                  <StepName $small={s.pending}>{s.name}</StepName>
                  <StepState $small={s.pending}>{s.state}</StepState>
                </div>
              </Step>
            ))}
          </Steps>
          <Track><Fill /></Track>
        </Panel>
      </Main>
    </Shell>
  );
}
